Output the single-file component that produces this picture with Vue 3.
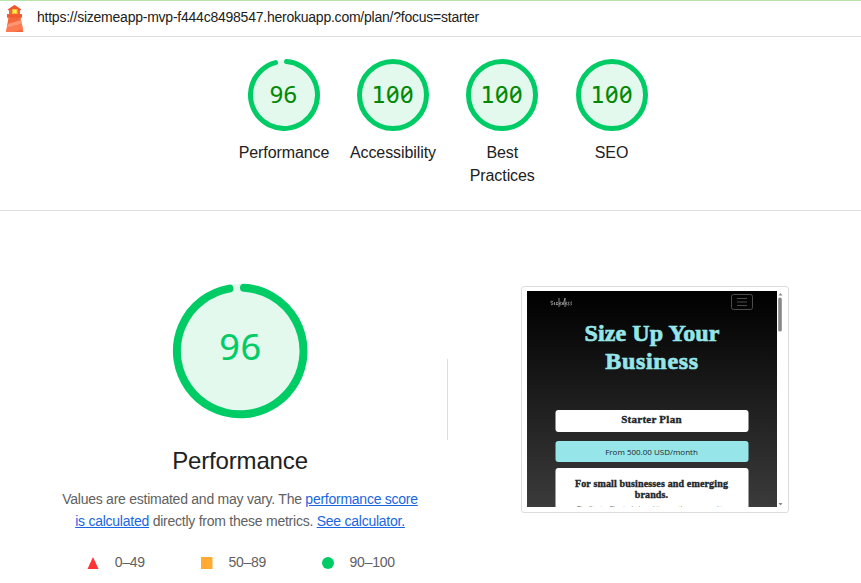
<script setup>
const gauges = [
  { label: 'Performance', score: 96 },
  { label: 'Accessibility', score: 100 },
  { label: 'Best Practices', score: 100 },
  { label: 'SEO', score: 100 },
]
</script>

<template>
  <div class="report">
    <header class="topbar">
      <svg class="logo" width="20" height="29" viewBox="0 0 20 29">
        <path d="M4 5.200 9.500 1 15 5.200V10h2v3.500h-1.500L18.200 28H1L3.500 13.500H2V10h2z" fill="#f4673a" />
        <path d="M3 5.200 9.500 1 16 5.200v1H3z" fill="#ee5632" />
        <path d="M2 10.500h15v3H2z" fill="#f0582f" />
        <path d="m2.800 20 13.200-4 .9 3.800L2 24z" fill="#ff9470" />
        <path d="m2 24.500 14.800-4.700 1.400 5L9 28H1z" fill="#ff7a50" />
        <path d="M7 5h5.500v5H7z" fill="#ffb62e" />
        <path d="M8 6h3.500v3H8z" fill="#ffef55" />
      </svg>
      <span class="url">https://sizemeapp-mvp-f444c8498547.herokuapp.com/plan/?focus=starter</span>
    </header>

    <section class="scores">
      <div v-for="g in gauges" :key="g.label" class="gauge">
        <svg width="72" height="72" viewBox="0 0 72 72">
          <circle cx="36" cy="36" r="35" fill="#e4f9ee" />
          <circle v-if="g.score === 100" class="ring" cx="36" cy="36" r="33.5" />
          <path v-else class="ring" d="M38.500 2.600A33.500 33.500 0 1 1 27.500 3.600" />
          <text v-if="g.score === 100" class="mono" y="44"><tspan x="14.500">1</tspan><tspan class="zero" x="29 43">00</tspan></text>
          <text v-else class="digits" x="21.800 35.600" y="44">96</text>
        </svg>
        <span class="label">{{ g.label }}</span>
      </div>
    </section>

    <main class="category">
      <section class="summary">
        <svg class="big" width="136" height="136" viewBox="0 0 136 136">
          <circle cx="68" cy="68" r="67" fill="#e4f9ee" />
          <path class="ring thick" d="M72 4.800A63.300 63.300 0 1 1 57.500 5.600" />
          <text class="digits large" x="47.200 68.400" y="76.500">96</text>
        </svg>
        <h1>Performance</h1>
        <p><span class="line1">Values are estimated and may vary. The <a>performance score</a></span><br><span class="line2"><a>is calculated</a> directly from these metrics. <a>See calculator.</a></span></p>
        <div class="legend">
          <span><svg width="12" height="12"><path d="M6 0 11.500 12H.5z" fill="#f33" /></svg>0–49</span>
          <span><svg width="12" height="12"><path d="M0 0h11.500v12H0z" fill="#fa3" /></svg>50–89</span>
          <span><svg width="12" height="12"><circle cx="6" cy="6" r="6" fill="#0c6" /></svg>90–100</span>
        </div>
      </section>

      <div class="divider"></div>

      <div class="frame">
        <div class="page">
          <div class="nav">
            <svg width="22" height="12" viewBox="0 0 22 12" fill="none" stroke="#bbb" stroke-width=".7">
              <path d="M3 4.500c-3-1-3 1.500-1 1.500s1 2.500-1 1.500M4.500 5v3M6 5.500h1.500l-1.500 2h2M9 1v9M9.500 6c2-2 2 1 0 .5 0 1.500 1 1.500 2 1M12 5l1 3 2-7v9M15.500 6c2-2 2 1 0 .5 0 1.500 1 1.500 2 1M19.500 5c-2 0-1 1.500-.5 2s-.5 1.500-1 1M22 5c-2 0-1 1.500-.5 2s-.5 1.500-1 1" />
            </svg>
            <svg width="22" height="16" viewBox="0 0 22 16" fill="none" stroke="#4c4c4c">
              <rect x=".5" y=".5" width="21" height="15" rx="2" />
              <path d="M6 4.500h10M6 8h10M6 11.500h10" />
            </svg>
          </div>
          <h2><span class="l1">Size Up Your</span><br><span class="l2">Business</span></h2>
          <div class="card plan">Starter Plan</div>
          <div class="card price">From 500.00 USD/month</div>
          <div class="card detail">
            <div class="pitch">For small businesses and emerging<br>brands.</div>
            <div class="copy">The Starter Plan includes a bit more than you need to</div>
          </div>
        </div>
        <div class="scroll">
          <svg width="8" height="216" viewBox="0 0 8 216" fill="#888">
            <path d="M1.500 4.500 3.500 2l2 2.500z" />
            <rect x="1.200" y="6.500" width="3.600" height="34" rx="1.600" />
            <path d="m1.500 212 2 2.500 2-2.500z" />
          </svg>
        </div>
      </div>
    </main>
  </div>
</template>

<style>
body { margin: 0; background: #fff; overflow: hidden; }
</style>

<style scoped>
* { box-sizing: border-box; }
svg { display: block; flex: none; }
.report { width: 861px; height: 583px; overflow: hidden; font-family: "Liberation Sans", sans-serif; color: #212121; }
.topbar { height: 37px; display: flex; align-items: flex-start; border-top: 1px solid #b9e5aa; border-bottom: 1px solid #dedede; padding: 3px 0 0 5px; }
.url { font-size: 14px; line-height: 16px; margin: 5px 0 0 12px; white-space: nowrap; letter-spacing: -.235px; }
.scores { height: 174px; border-bottom: 1px solid #dedede; padding: 22px 0 0 229px; display: flex; }
.gauge { width: 109.300px; display: flex; flex-direction: column; align-items: center; }
.label { font-size: 16px; line-height: 23px; text-align: center; width: 90px; margin-top: 10px; letter-spacing: -.08px; }
.ring { fill: none; stroke: #0c6; stroke-width: 5; stroke-linecap: round; }
.thick { stroke-width: 8; }
.digits { font: 23.500px "Noto Sans", sans-serif; fill: #080; stroke: #080; stroke-width: .15px; }
.mono { font: 23px "DejaVu Sans Mono", monospace; fill: #080; stroke: #080; stroke-width: .15px; }
.zero { font: 23.500px "Noto Sans", sans-serif; font-feature-settings: "zero" 1; }
.large { font-size: 36px; fill: #0c6; stroke: #0c6; }
.category { display: flex; height: 372px; }
.summary { width: 447px; padding: 72px 0 0 33px; display: flex; flex-direction: column; align-items: center; }
h1 { font-size: 24px; line-height: 30px; font-weight: 400; margin: 27px 0 0; letter-spacing: -.15px; }
.summary p { font-size: 14px; line-height: 22px; color: #616161; text-align: center; margin: 12px 0 0; white-space: nowrap; }
.line1 { letter-spacing: -.25px; }
.line2 { letter-spacing: -.245px; }
.summary a { color: #1a66e0; text-decoration: underline; }
.legend { display: flex; gap: 56px; margin-top: 20px; font-size: 14px; line-height: 20px; color: #616161; letter-spacing: -.25px; margin-left: 2px; }
.legend span { display: flex; align-items: center; gap: 15.500px; }
.legend svg { position: relative; top: 1px; }
.divider { width: 1px; height: 81px; margin-top: 148px; background: #dedede; }
.frame { display: flex; margin: 75px 0 0 73px; width: 268px; height: 227px; border: 1px solid #ddd; border-radius: 3px; padding: 4px 3px 5px 5px; }
.page { width: 250px; height: 216px; overflow: hidden; background: linear-gradient(#000 0, #0b0b0b 20%, #202020 55%, #3b3b3b 100%); color: #212529; text-align: center; }
.nav { display: flex; justify-content: space-between; padding: 3px 24px 0 23px; height: 28px; }
.nav svg:first-child { margin-top: 3px; }
h2 { margin: 0; color: #95e5e9; font-size: 24px; line-height: 28px; font-family: "Liberation Serif", serif; font-weight: 700; -webkit-text-stroke: .7px #95e5e9; }
.l1 { letter-spacing: .1px; }
.l2 { letter-spacing: .7px; }
.card { width: 193px; margin: 0 auto; border-radius: 3px; background: #fff; font-family: "Liberation Serif", serif; font-weight: 700; transform: translateX(-.5px); }
.plan { margin-top: 35px; height: 22px; font-size: 11px; line-height: 19px; letter-spacing: .25px; -webkit-text-stroke: .35px #212529; }
.price { margin-top: 9px; height: 21px; background: #95e5e9; font: 400 8px/21px "Open Sans", sans-serif; }
.detail { margin-top: 6px; height: 50px; padding-top: 10px; }
.pitch { font-size: 10px; line-height: 11px; white-space: nowrap; letter-spacing: .15px; -webkit-text-stroke: .35px #212529; }
.copy { font: 6px/8px "Open Sans", sans-serif; margin-top: 4px; white-space: nowrap; color: #666; }
</style>
